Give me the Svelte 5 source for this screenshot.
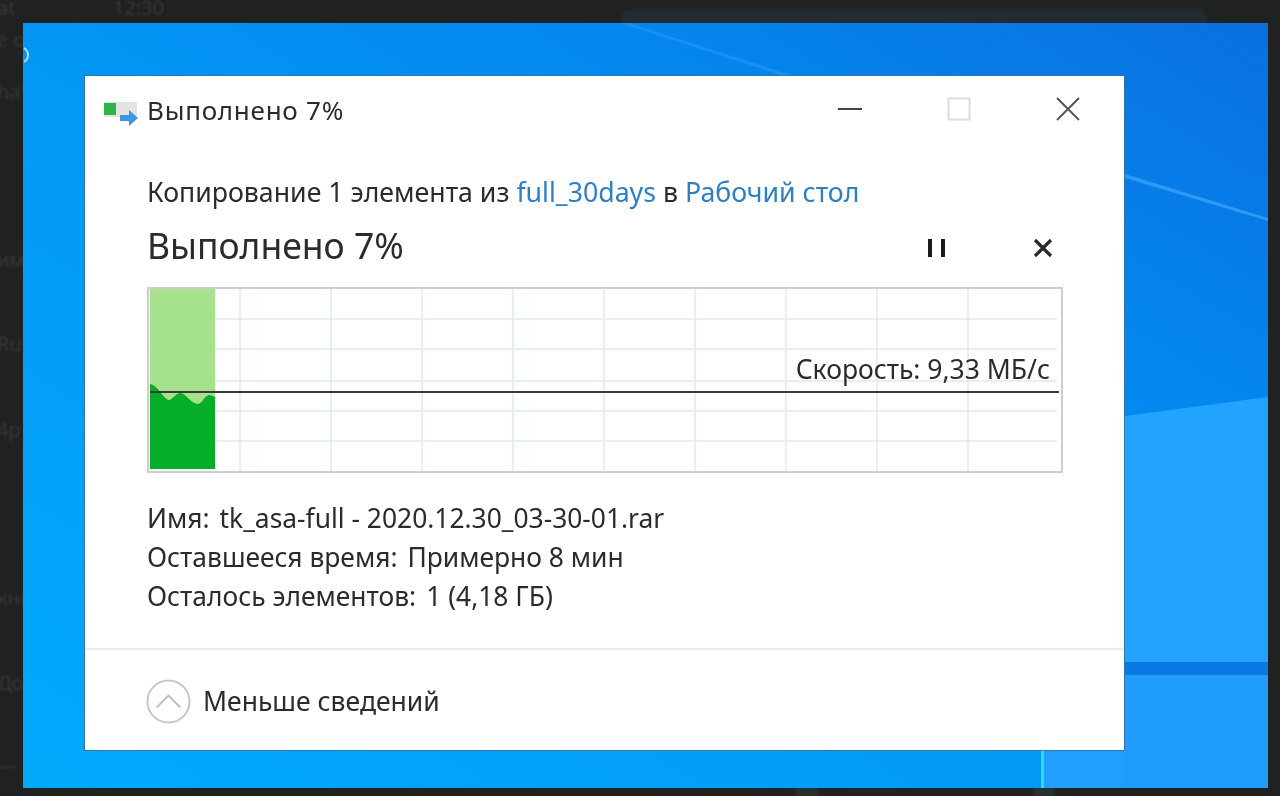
<script>
    const stripRows = [
        { text: 'at', top: -6 },
        { text: 'е о', top: 26 },
        { text: 'hat', top: 78 },
        { text: 'им', top: 246 },
        { text: 'Ru', top: 330 },
        { text: '4р', top: 416 },
        { text: 'кни', top: 584 },
        { text: 'До', top: 669 }
    ];

    const details = [
        { label: 'Имя:', value: 'tk_asa-full - 2020.12.30_03-30-01.rar' },
        { label: 'Оставшееся время:', value: 'Примерно 8 мин' },
        { label: 'Осталось элементов:', value: '1 (4,18 ГБ)' }
    ];

    // grid lines of the speed chart, in chart coordinates
    const gridX = [91, 182, 273, 364, 455, 546, 637, 728, 819];
    const gridY = [30, 60, 92, 122, 152];
</script>

<main class="screen">
    <div class="backdrop" aria-hidden="true">
        {#each stripRows as row}
            <span class="strip-text" style="top: {row.top}px">{row.text}</span>
        {/each}
        <span class="strip-time">12:30</span>
        <div class="strip-panel"></div>
        <div class="strip-rule"></div>
        <div class="strip-stub first"></div>
        <div class="strip-stub second"></div>
    </div>

    <div class="desktop">
        <svg class="wallpaper" viewBox="0 0 1245 765" preserveAspectRatio="none" aria-hidden="true">
            <defs>
                <linearGradient id="sky" x1="0" y1="1" x2="1" y2="0">
                    <stop offset="0" stop-color="#01a9fb" />
                    <stop offset="0.45" stop-color="#0299f5" />
                    <stop offset="0.75" stop-color="#0485ee" />
                    <stop offset="1" stop-color="#0a6fdf" />
                </linearGradient>
            </defs>
            <rect width="1245" height="765" fill="url(#sky)" />
            <polygon points="1102,393 1245,374 1245,639 1102,639" fill="#22a3fe" />
            <rect x="1102" y="639" width="143" height="13" fill="#0878e2" />
            <rect x="1102" y="652" width="143" height="113" fill="#209cfd" />
            <rect x="1020" y="728" width="82" height="37" fill="#229ffd" />
            <rect x="1018" y="728" width="3" height="37" fill="#2fd5f5" />
            <polygon points="597,0 606,0 768,52 757,52" fill="#2a9bf5" opacity="0.55" />
            <polygon points="1102,151 1245,195 1245,198 1102,155" fill="#3098f6" />
            <path d="M1 25c3 2 4 5 4 7s-1 5-4 7" fill="none" stroke="#a6e0ff" stroke-width="2" />
        </svg>

        <section class="window">
            <header class="title-bar">
                <svg class="title-icon" viewBox="0 0 36 26" aria-hidden="true">
                    <rect x="1" y="2" width="33" height="15" fill="#e3e3e3" />
                    <rect x="1" y="3" width="12" height="12" fill="#2fb344" />
                    <path d="M17 15h9v-5l9 8-9 8v-5h-9z" fill="#3f94e4" />
                </svg>
                <span class="title-text">Выполнено 7%</span>
                <div class="window-controls">
                    <svg viewBox="0 0 24 24" aria-hidden="true"><path d="M0 12h24" stroke="#444" stroke-width="2" /></svg>
                    <svg viewBox="0 0 24 24" aria-hidden="true"><rect x="1.5" y="1.5" width="21" height="21" fill="none" stroke="#dcdcdc" stroke-width="2" /></svg>
                    <svg viewBox="0 0 24 24" aria-hidden="true"><path d="M1 1l22 22M23 1L1 23" stroke="#555" stroke-width="2" /></svg>
                </div>
            </header>

            <div class="content">
                <p class="copy-line">Копирование 1 элемента из <span class="link">full_30days</span> в <span class="link">Рабочий стол</span></p>

                <div class="progress-head">
                    <h1>Выполнено 7%</h1>
                    <div class="progress-controls">
                        <svg viewBox="0 0 20 20" aria-hidden="true"><path d="M3 1v18M16 1v18" stroke="#1a1a1a" stroke-width="4" /></svg>
                        <svg viewBox="0 0 20 20" aria-hidden="true"><path d="M2 2l16 16M18 2L2 18" stroke="#2a2a2a" stroke-width="3.2" /></svg>
                    </div>
                </div>

                <div class="chart">
                    <svg class="chart-grid" viewBox="0 0 912 182" aria-hidden="true">
                        {#each gridY as y}
                            <line x1="0" x2="908" y1={y} y2={y} stroke="#dcefdf" stroke-width="1.5" />
                        {/each}
                        {#each gridX as x}
                            <line x1={x} x2={x} y1="0" y2="182" stroke="#dcefdf" stroke-width="1.5" />
                        {/each}
                        <rect x="1" y="0" width="65" height="180" fill="#a6e18e" />
                        <path d="M1 95C6 96 9 100 12 104C15 108 18 111 20 111C23 111 26 105 31 104C36 103 42 115 49 115C53 115 56 106 60 106C62 106 64 107 66 108V180H1Z" fill="#06ad27" />
                        <line x1="1" x2="910" y1="103" y2="103" stroke="#3a3a3a" stroke-width="2" />
                    </svg>
                    <span class="speed">Скорость: 9,33 МБ/с</span>
                </div>

                <dl class="details">
                    {#each details as item}
                        <div class="detail-row">
                            <dt>{item.label}</dt>
                            <dd>{item.value}</dd>
                        </div>
                    {/each}
                </dl>
            </div>

            <footer class="window-footer">
                <svg class="less-icon" viewBox="0 0 46 46" aria-hidden="true">
                    <circle cx="23" cy="23" r="21.5" fill="none" stroke="#c6c6c6" stroke-width="2" />
                    <path d="M11 29l12-12 12 12" fill="none" stroke="#bcbcbc" stroke-width="2" />
                </svg>
                <span>Меньше сведений</span>
            </footer>
        </section>
    </div>
</main>

<style>
    :global(body) {
        margin: 0;
        background: #202121;
    }

    .screen {
        position: relative;
        box-sizing: border-box;
        width: 1280px;
        height: 796px;
        padding: 23px 12px 8px 23px;
        overflow: hidden;
        background: #202121;
        font-family: "Noto Sans", "Open Sans", sans-serif;
    }

    .backdrop {
        position: absolute;
        inset: 0;
        color: #383939;
        font-size: 20px;
        filter: blur(1px);
    }

    .strip-text {
        position: absolute;
        left: -3px;
        width: 26px;
        overflow: hidden;
        white-space: nowrap;
    }

    .strip-time {
        position: absolute;
        left: 113px;
        top: -6px;
    }

    .strip-panel {
        position: absolute;
        left: 622px;
        top: 9px;
        width: 585px;
        height: 30px;
        border-radius: 8px;
        background: #232b30;
    }

    .strip-rule {
        position: absolute;
        left: 0;
        top: 767px;
        width: 15px;
        height: 1px;
        background: #3d3e3e;
    }

    .strip-stub {
        position: absolute;
        top: 786px;
        height: 12px;
        background: #263030;
    }

    .strip-stub.first {
        left: 796px;
        width: 22px;
    }

    .strip-stub.second {
        left: 1033px;
        width: 22px;
    }

    .desktop {
        position: relative;
        box-sizing: border-box;
        height: 765px;
        padding: 52px 143px 37px 61px;
    }

    .wallpaper {
        position: absolute;
        inset: 0;
        width: 100%;
        height: 100%;
    }

    .window {
        position: relative;
        box-sizing: border-box;
        display: flex;
        flex-direction: column;
        height: 676px;
        background: #fff;
        border: 1px solid #2f76ad;
        color: #2b2b2b;
        filter: blur(0.4px);
    }

    .title-bar {
        display: flex;
        align-items: center;
        height: 68px;
        padding: 0 44px 0 18px;
        flex: none;
    }

    .title-icon {
        width: 36px;
        height: 26px;
        margin: 6px 8px 0 0;
    }

    .title-text {
        font-size: 26px;
        letter-spacing: 0.75px;
    }

    .window-controls {
        display: flex;
        align-items: center;
        gap: 85px;
        margin: -2px 0 0 auto;
    }

    .window-controls svg {
        width: 24px;
        height: 24px;
    }

    .content {
        flex: 1;
        padding: 29px 61px 0 62px;
    }

    .copy-line {
        margin: 0;
        font-size: 26.7px;
        line-height: 38px;
        white-space: nowrap;
    }

    .link {
        color: #2c7fc6;
    }

    .progress-head {
        display: flex;
        align-items: center;
        justify-content: space-between;
        height: 68px;
        padding-right: 10px;
    }

    h1 {
        margin: 0;
        font-size: 35.5px;
        font-weight: 400;
    }

    .progress-controls {
        display: flex;
        gap: 86px;
        margin-top: 6px;
    }

    .progress-controls svg {
        width: 20px;
        height: 20px;
    }

    .chart {
        position: relative;
        box-sizing: border-box;
        height: 186px;
        margin-top: 8px;
        border: 2px solid #cdcdcd;
    }

    .chart-grid {
        display: block;
        width: 100%;
        height: 100%;
    }

    .speed {
        position: absolute;
        right: 11px;
        top: 62px;
        font-size: 26.5px;
        line-height: 36px;
        white-space: nowrap;
    }

    .details {
        margin: 26px 0 0;
        font-size: 26.4px;
        line-height: 39px;
    }

    .detail-row {
        display: flex;
        gap: 10px;
    }

    dt, dd {
        margin: 0;
    }

    .window-footer {
        box-sizing: border-box;
        display: flex;
        align-items: center;
        gap: 12px;
        flex: none;
        height: 102px;
        padding: 2px 0 0 61px;
        border-top: 2px solid #ececec;
        font-size: 26.5px;
    }

    .less-icon {
        width: 45px;
        height: 45px;
    }
</style>
